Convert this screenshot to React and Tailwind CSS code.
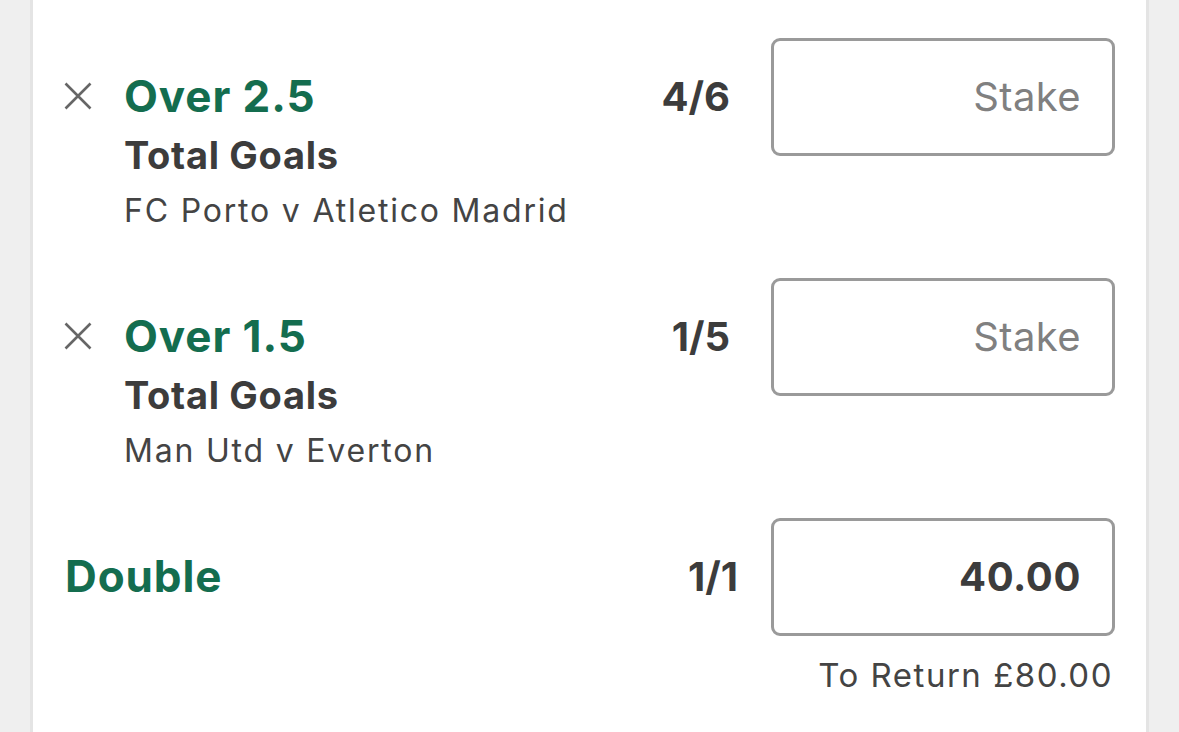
import React from 'react';

const font = { fontFamily: 'Inter, "Noto Sans", sans-serif' };

function CloseIcon() {
  return (
    <svg width="28" height="28" viewBox="0 0 28 28" className="shrink-0">
      <path d="M1.5 1.5 L26.5 26.5 M26.5 1.5 L1.5 26.5" stroke="#666" strokeWidth="2.6" strokeLinecap="butt" />
    </svg>
  );
}

function StakeBox({ value }) {
  return (
    <div className="w-[344px] h-[118px] shrink-0 rounded-[9px] border-[3px] border-[#9a9a9a] flex items-center justify-end pr-[31px]">
      {value ? (
        <span className="text-[40px] leading-[48px] font-bold text-[#3c3c3c] tracking-[0.6px]">{value}</span>
      ) : (
        <span className="text-[40px] leading-[48px] text-[#808080] tracking-[0.4px]">Stake</span>
      )}
    </div>
  );
}

function Selection({ name, market, event, odds }) {
  return (
    <div className="flex h-[240px]">
      <div className="flex-1 pt-[34px]">
        <div className="flex items-center h-[48px]">
          <div className="w-[60px]">
            <CloseIcon />
          </div>
          <span className="text-[44px] leading-[48px] font-bold text-[#146d4f] tracking-[0.9px]">{name}</span>
        </div>
        <div className="pl-[60px] mt-[13px] text-[38px] leading-[44px] font-bold text-[#3c3c3c] tracking-[0.7px]">
          {market}
        </div>
        <div className="pl-[60px] mt-[14px] text-[32px] leading-[40px] text-[#444] tracking-[1.8px]">{event}</div>
      </div>
      <div className="h-[118px] flex items-center mr-[41px]">
        <span className="text-[40px] leading-[48px] font-bold text-[#3c3c3c]">{odds}</span>
      </div>
      <StakeBox />
    </div>
  );
}

export default function App() {
  return (
    <div className="h-[732px] overflow-hidden bg-[#efefef] flex justify-center" style={font}>
      <div className="w-[1119px] h-full bg-white border-x-[3px] border-[#e4e4e4] px-[31px] pt-[38px]">
        <Selection name="Over 2.5" market="Total Goals" event="FC Porto v Atletico Madrid" odds="4/6" />
        <Selection name="Over 1.5" market="Total Goals" event="Man Utd v Everton" odds="1/5" />
        <div className="flex">
          <div className="flex-1 pt-[34px]">
            <div className="pl-[1px] text-[44px] leading-[48px] font-bold text-[#146d4f] tracking-[0.9px]">Double</div>
          </div>
          <div className="h-[118px] flex items-center mr-[33px]">
            <span className="text-[40px] leading-[48px] font-bold text-[#3c3c3c]">1/1</span>
          </div>
          <div className="flex flex-col items-end">
            <StakeBox value="40.00" />
            <div className="mt-[19px] pr-[2px] text-[33px] leading-[40px] text-[#444] tracking-[1.5px]">To Return £80.00</div>
          </div>
        </div>
      </div>
    </div>
  );
}
